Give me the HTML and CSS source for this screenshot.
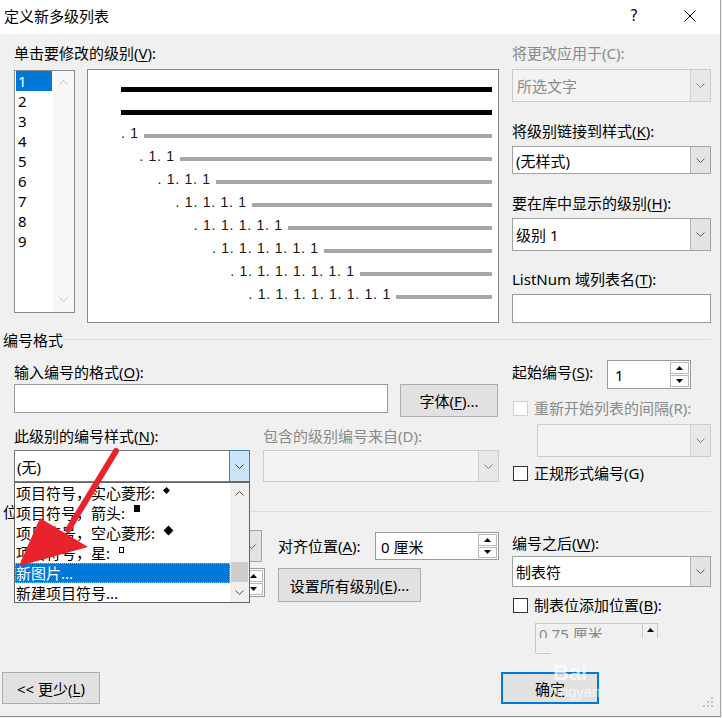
FILE: index.html
```html
<!DOCTYPE html>
<html>

	<head>

		<meta charset="UTF-8">
		<link rel="stylesheet" href="styles.css">
		<title>定义新多级列表</title>

	</head>

	<body>

		<div class="dialog">

			<div class="titlebar">
				<span class="title">定义新多级列表</span>
				<span class="help">?</span>
				<svg class="close" width="12" height="12" viewBox="0 0 12 12"><path d="M0.5 0.5 L11.5 11.5 M11.5 0.5 L0.5 11.5" stroke="#000" stroke-width="1" fill="none"/></svg>
			</div>

			<div class="content">

				<!-- levels + preview / right side -->
				<div class="cols">
					<div class="col-main">
						<div class="label">单击要修改的级别(<u>V</u>):</div>
						<div class="levels">
							<div class="listbox">
								<div class="list-items">
									<div class="list-item selected">1</div>
									<div class="list-item">2</div>
									<div class="list-item">3</div>
									<div class="list-item">4</div>
									<div class="list-item">5</div>
									<div class="list-item">6</div>
									<div class="list-item">7</div>
									<div class="list-item">8</div>
									<div class="list-item">9</div>
								</div>
								<div class="vscroll">
									<svg width="9" height="5" viewBox="0 0 9 5"><path d="M0.5 4.5 L4.5 0.5 L8.5 4.5" fill="none" stroke="#c2c2c2"/></svg>
									<svg width="9" height="5" viewBox="0 0 9 5"><path d="M0.5 0.5 L4.5 4.5 L8.5 0.5" fill="none" stroke="#c2c2c2"/></svg>
								</div>
							</div>
							<div class="preview">
								<div class="prow"><span class="pbar black"></span></div>
								<div class="prow"><span class="pbar black"></span></div>
								<div class="prow" style="--i:0"><span class="pnum">. 1</span><span class="pbar"></span></div>
								<div class="prow" style="--i:1"><span class="pnum">. 1. 1</span><span class="pbar"></span></div>
								<div class="prow" style="--i:2"><span class="pnum">. 1. 1. 1</span><span class="pbar"></span></div>
								<div class="prow" style="--i:3"><span class="pnum">. 1. 1. 1. 1</span><span class="pbar"></span></div>
								<div class="prow" style="--i:4"><span class="pnum">. 1. 1. 1. 1. 1</span><span class="pbar"></span></div>
								<div class="prow" style="--i:5"><span class="pnum">. 1. 1. 1. 1. 1. 1</span><span class="pbar"></span></div>
								<div class="prow" style="--i:6"><span class="pnum">. 1. 1. 1. 1. 1. 1. 1</span><span class="pbar"></span></div>
								<div class="prow" style="--i:7"><span class="pnum">. 1. 1. 1. 1. 1. 1. 1. 1</span><span class="pbar"></span></div>
							</div>
						</div>
					</div>

					<div class="col-side">
						<div class="label disabled">将更改应用于(C):</div>
						<div class="combo disabled apply">
							<span class="combo-text">所选文字</span>
							<span class="combo-btn"><svg width="9" height="5" viewBox="0 0 9 5"><path d="M0.5 0.5 L4.5 4.5 L8.5 0.5" fill="none" stroke="#808080"/></svg></span>
						</div>
						<div class="label side-gap">将级别链接到样式(<u>K</u>):</div>
						<div class="combo link-style">
							<span class="combo-text">(无样式)</span>
							<span class="combo-btn"><svg width="9" height="5" viewBox="0 0 9 5"><path d="M0.5 0.5 L4.5 4.5 L8.5 0.5" fill="none" stroke="#606060"/></svg></span>
						</div>
						<div class="label side-gap">要在库中显示的级别(<u>H</u>):</div>
						<div class="combo gallery-level">
							<span class="combo-text">级别 1</span>
							<span class="combo-btn"><svg width="9" height="5" viewBox="0 0 9 5"><path d="M0.5 0.5 L4.5 4.5 L8.5 0.5" fill="none" stroke="#606060"/></svg></span>
						</div>
						<div class="label side-gap-s">ListNum 域列表名(<u>T</u>):</div>
						<div class="textbox listnum"></div>
					</div>
				</div>

				<!-- 编号格式 -->
				<div class="group-head">
					<span>编号格式</span>
					<i class="group-line"></i>
				</div>

				<div class="cols">
					<div class="col-main">
						<div class="label fmt-label">输入编号的格式(<u>O</u>):</div>
						<div class="fmt-row">
							<div class="textbox fmt-input"></div>
							<button class="btn font-btn">字体(<u>F</u>)...</button>
						</div>
						<div class="style-grid">
							<div class="label">此级别的编号样式(<u>N</u>):</div>
							<div class="label disabled">包含的级别编号来自(D):</div>
							<div class="combo focused">
								<span class="combo-text">(无)</span>
								<span class="combo-btn"><svg width="9" height="5" viewBox="0 0 9 5"><path d="M0.5 0.5 L4.5 4.5 L8.5 0.5" fill="none" stroke="#404040"/></svg></span>
							</div>
							<div class="combo disabled">
								<span class="combo-text"></span>
								<span class="combo-btn"><svg width="9" height="5" viewBox="0 0 9 5"><path d="M0.5 0.5 L4.5 4.5 L8.5 0.5" fill="none" stroke="#808080"/></svg></span>
							</div>
						</div>
					</div>

					<div class="col-side">
						<div class="start-row">
							<span class="label">起始编号(<u>S</u>):</span>
							<div class="spin start-spin">
								<span class="spin-text">1</span>
								<span class="spin-btns">
									<span class="spin-btn"><svg width="7" height="4" viewBox="0 0 7 4"><path d="M0 4 L3.5 0 L7 4Z" fill="#000"/></svg></span>
									<span class="spin-btn"><svg width="7" height="4" viewBox="0 0 7 4"><path d="M0 0 L3.5 4 L7 0Z" fill="#000"/></svg></span>
								</span>
							</div>
						</div>
						<label class="check disabled restart">
							<span class="check-box"></span>
							<span>重新开始列表的间隔(R):</span>
						</label>
						<div class="combo disabled restart-combo">
							<span class="combo-text"></span>
							<span class="combo-btn"><svg width="9" height="5" viewBox="0 0 9 5"><path d="M0.5 0.5 L4.5 4.5 L8.5 0.5" fill="none" stroke="#808080"/></svg></span>
						</div>
						<label class="check legal">
							<span class="check-box"></span>
							<span>正规形式编号(G)</span>
						</label>
					</div>
				</div>

				<!-- 位置 (left part is covered by the open list) -->
				<div class="group-head pos-head">
					<span>位</span>
					<i class="group-line"></i>
				</div>

				<div class="cols">
					<div class="col-main">
						<div class="pos-row">
							<span class="pos-space"></span>
							<div class="combo align-combo">
								<span class="combo-text"></span>
								<span class="combo-btn"><svg width="9" height="5" viewBox="0 0 9 5"><path d="M0.5 0.5 L4.5 4.5 L8.5 0.5" fill="none" stroke="#606060"/></svg></span>
							</div>
							<span class="label at-label">对齐位置(<u>A</u>):</span>
							<div class="spin at-spin">
								<span class="spin-text">0 厘米</span>
								<span class="spin-btns">
									<span class="spin-btn"><svg width="7" height="4" viewBox="0 0 7 4"><path d="M0 4 L3.5 0 L7 4Z" fill="#000"/></svg></span>
									<span class="spin-btn"><svg width="7" height="4" viewBox="0 0 7 4"><path d="M0 0 L3.5 4 L7 0Z" fill="#000"/></svg></span>
								</span>
							</div>
						</div>
						<div class="pos-row second">
							<span class="pos-space"></span>
							<div class="spin indent-spin">
								<span class="spin-text"></span>
								<span class="spin-btns">
									<span class="spin-btn"><svg width="7" height="4" viewBox="0 0 7 4"><path d="M0 4 L3.5 0 L7 4Z" fill="#000"/></svg></span>
									<span class="spin-btn"><svg width="7" height="4" viewBox="0 0 7 4"><path d="M0 0 L3.5 4 L7 0Z" fill="#000"/></svg></span>
								</span>
							</div>
							<button class="btn all-btn">设置所有级别(<u>E</u>)...</button>
						</div>
					</div>

					<div class="col-side">
						<div class="label after-label">编号之后(<u>W</u>):</div>
						<div class="combo after-combo">
							<span class="combo-text">制表符</span>
							<span class="combo-btn"><svg width="9" height="5" viewBox="0 0 9 5"><path d="M0.5 0.5 L4.5 4.5 L8.5 0.5" fill="none" stroke="#606060"/></svg></span>
						</div>
						<label class="check tab-check">
							<span class="check-box"></span>
							<span>制表位添加位置(<u>B</u>):</span>
						</label>
						<div class="tabpos">
							<div class="tabpos-clip">
								<span class="tabpos-text">0.75 厘米</span>
								<span class="tabpos-btn"><svg width="7" height="4" viewBox="0 0 7 4"><path d="M0 4 L3.5 0 L7 4Z" fill="#000"/></svg></span>
							</div>
							<div class="tabpos-stub"></div>
						</div>
					</div>
				</div>

				<div class="footer">
					<button class="btn less-btn">&lt;&lt; 更少(<u>L</u>)</button>
					<button class="btn ok-btn">确定</button>
				</div>

			</div>

			<!-- open dropdown of 此级别的编号样式 -->
			<div class="dropdown">
				<div class="dd-items">
					<div class="dd-item">项目符号，实心菱形: <span class="sym diamond-s"></span></div>
					<div class="dd-item">项目符号，箭头: <span class="sym square-s"></span></div>
					<div class="dd-item">项目符号，空心菱形: <span class="sym diamond-l"></span></div>
					<div class="dd-item">项目符号，星: <span class="sym square-o"></span></div>
					<div class="dd-item selected">新图片...</div>
					<div class="dd-item">新建项目符号...</div>
				</div>
				<div class="dd-scroll">
					<span class="dd-arrow"><svg width="9" height="5" viewBox="0 0 9 5"><path d="M0.5 4.5 L4.5 0.5 L8.5 4.5" fill="none" stroke="#505050"/></svg></span>
					<span class="dd-track"><span class="dd-thumb"></span></span>
					<span class="dd-arrow"><svg width="9" height="5" viewBox="0 0 9 5"><path d="M0.5 0.5 L4.5 4.5 L8.5 0.5" fill="none" stroke="#505050"/></svg></span>
				</div>
			</div>

			<div class="watermark">
				<span class="wm-big">Bai</span>
				<span class="wm-small">jingyan</span>
			</div>

			<svg class="grip" width="10" height="10" viewBox="0 0 10 10"><rect x="8" y="0" width="2" height="2" fill="#c4c4c4"/><rect x="8" y="4" width="2" height="2" fill="#c4c4c4"/><rect x="4" y="4" width="2" height="2" fill="#c4c4c4"/><rect x="8" y="8" width="2" height="2" fill="#c4c4c4"/><rect x="4" y="8" width="2" height="2" fill="#c4c4c4"/><rect x="0" y="8" width="2" height="2" fill="#c4c4c4"/></svg>

			<svg class="red-arrow" width="722" height="718" viewBox="0 0 722 718">
				<line x1="116" y1="451" x2="68" y2="530" stroke="#e8232b" stroke-width="6" stroke-linecap="round"/>
				<polygon points="19,566 40,518 88,547" fill="#e8232b"/>
			</svg>

		</div>

	</body>
</html>
```

FILE: styles.css
```css
* {
	box-sizing: border-box;
}
body {
	margin: 0;
	background: #f0f0f0;
	font-family: "Noto Sans", "Noto Sans CJK SC", sans-serif;
	font-size: 15px;
	color: #000;
}
button {
	font: inherit;
	color: inherit;
}
u {
	text-decoration: underline;
	text-underline-offset: 2px;
	text-decoration-thickness: 1px;
}

.dialog {
	position: relative;
	width: 721px;
	height: 717px;
	background: #f0f0f0;
	border-right: 1px solid #a3a3a3;
	border-bottom: 1px solid #8c8c8c;
	overflow: hidden;
}

/* title bar */
.titlebar {
	display: flex;
	align-items: center;
	height: 34px;
	padding: 0 24px 2px 4px;
	background: #fff;
}
.title {
	flex: 1;
	line-height: 20px;
}
.help {
	width: 10px;
	font-family: "DejaVu Sans", sans-serif;
	font-size: 15px;
	line-height: 20px;
	color: #111;
}
.close {
	margin-left: 44px;
}

.content {
	padding: 9px 9px 0 14px;
}
.cols {
	display: flex;
	gap: 13px;
}
.col-main {
	width: 485px;
}
.col-side {
	width: 200px;
}
.label {
	height: 20px;
	line-height: 20px;
	white-space: nowrap;
}
.disabled,
.label.disabled {
	color: #8a8a8a;
}

/* level list */
.levels {
	display: flex;
	gap: 12px;
	margin-top: 6px;
}
.listbox {
	display: flex;
	width: 61px;
	height: 243px;
	margin-top: 1px;
	background: #fff;
	border: 1px solid #8a8a8a;
}
.list-items {
	width: 38px;
	padding: 0 1px;
}
.list-item {
	height: 20px;
	line-height: 20px;
	padding-left: 2px;
}
.list-item.selected {
	background: #0078d7;
	color: #fff;
}
.vscroll {
	flex: 1;
	display: flex;
	flex-direction: column;
	justify-content: space-between;
	align-items: center;
	padding: 9px 0 10px;
	background: #f7f7f7;
}

/* preview */
.preview {
	width: 412px;
	height: 254px;
	padding: 8px 6px 0 33px;
	background: #fff;
	border: 1px solid #8a8a8a;
}
.prow {
	display: flex;
	align-items: center;
	height: 23px;
}
.pnum {
	margin: 0 5px 6px calc(var(--i) * 18.2px);
	font-family: "Liberation Sans", Arial, sans-serif;
	font-size: 14px;
	line-height: 14px;
	letter-spacing: 0.75px;
	white-space: pre;
	color: #141414;
}
.pbar {
	flex: 1;
	height: 4px;
	background: #a6a6a6;
}
.pbar.black {
	height: 5px;
	background: #000;
}

/* combos, text boxes, spins */
.combo {
	display: flex;
	background: #fff;
	border: 1px solid #a2a2a2;
}
.combo-text {
	flex: 1;
	display: flex;
	align-items: center;
	padding-left: 3px;
	white-space: nowrap;
	overflow: hidden;
}
.combo-btn {
	width: 20px;
	display: flex;
	align-items: center;
	justify-content: center;
	background: #e3e3e3;
	border-left: 1px solid #b4b4b4;
}
.combo.disabled {
	background: #f3f3f3;
	border-color: #cccccc;
}
.combo.disabled .combo-btn {
	background: #e8e8e8;
	border-left-color: #d0d0d0;
}
.combo.focused {
	border-color: #7a7a7a;
}
.combo.focused .combo-btn {
	background: #cce4f7;
	border: 1px solid #3c7fb1;
	margin: -1px -1px -1px 0;
	width: 21px;
}
.textbox {
	background: #fff;
	border: 1px solid #9a9a9a;
}
.spin {
	display: flex;
	background: #fff;
	border: 1px solid #9a9a9a;
}
.spin-text {
	flex: 1;
	display: flex;
	align-items: center;
	padding-left: 6px;
	white-space: nowrap;
	overflow: hidden;
}
.spin-btns {
	width: 20px;
	display: flex;
	flex-direction: column;
	gap: 1px;
	padding: 1px 1px 1px 0;
}
.spin-btn {
	flex: 1;
	display: flex;
	align-items: center;
	justify-content: center;
	background: #fdfdfd;
	border: 1px solid #b9b9b9;
}
.btn {
	display: flex;
	align-items: center;
	justify-content: center;
	padding: 0;
	background: #e1e1e1;
	border: 1px solid #adadad;
	white-space: nowrap;
}

/* checkboxes */
.check {
	display: flex;
	align-items: center;
	gap: 6px;
	height: 20px;
	line-height: 20px;
	white-space: nowrap;
}
.check-box {
	width: 15px;
	height: 15px;
	margin-left: 1px;
	background: #fff;
	border: 1px solid #333;
}
.check.disabled .check-box {
	border-color: #cfcfcf;
}

/* right column, top */
.apply {
	height: 33px;
	margin-top: 6px;
}
.apply .combo-text {
	padding-left: 4px;
}
.side-gap {
	margin-top: 19px;
}
.side-gap-s {
	margin-top: 18px;
}
.link-style {
	height: 28px;
	margin-top: 5px;
}
.gallery-level {
	height: 33px;
	margin-top: 5px;
}
.listnum {
	height: 29px;
	margin-top: 5px;
}

/* group headings */
.group-head {
	display: flex;
	align-items: center;
	height: 20px;
	margin: 7px 0 0 -11px;
	line-height: 20px;
}
.group-line {
	flex: 1;
	height: 1px;
	margin-top: -1px;
	background: #dcdcdc;
}
.pos-head {
	margin-top: 19px;
}
.pos-head .group-line {
	margin-left: 18px;
}

/* numbering format */
.fmt-label {
	margin-top: 12px;
}
.fmt-row {
	display: flex;
	align-items: flex-start;
	gap: 12px;
	margin-top: 2px;
}
.fmt-input {
	width: 374px;
	height: 29px;
}
.font-btn {
	width: 98px;
	height: 33px;
}
.style-grid {
	display: grid;
	grid-template-columns: 236px 236px;
	column-gap: 13px;
	row-gap: 4px;
	margin-top: 9px;
}
.style-grid .combo {
	height: 32px;
}
.style-grid .combo-text {
	padding-left: 2px;
}
.start-row {
	display: flex;
	align-items: flex-start;
	margin-top: 10px;
}
.start-row .label {
	width: 95px;
	margin-top: 2px;
}
.start-spin {
	width: 84px;
	height: 29px;
}
.start-spin .spin-text {
	padding-left: 7px;
}
.restart {
	margin-top: 9px;
}
.restart-combo {
	height: 33px;
	margin: 6px 0 0 25px;
}
.legal {
	margin-top: 6px;
}

/* position */
.pos-row {
	display: flex;
	align-items: center;
	height: 32px;
	margin-top: 8px;
}
.pos-row.second {
	align-items: flex-start;
	height: 34px;
	margin-top: 6px;
}
.pos-space {
	width: 126px;
}
.align-combo {
	width: 122px;
	height: 32px;
}
.at-label {
	width: 97px;
	margin-left: 16px;
}
.at-spin {
	width: 124px;
	height: 28px;
}
.at-spin .spin-text {
	padding-left: 5px;
}
.indent-spin {
	width: 125px;
	height: 29px;
}
.all-btn {
	width: 143px;
	height: 34px;
	margin-left: 13px;
}
.after-label {
	margin-top: 11px;
}
.after-combo {
	height: 31px;
	margin-top: 3px;
}
.tab-check {
	margin-top: 8px;
}
.tabpos {
	width: 123px;
	height: 30px;
	margin: 8px 0 0 23px;
	border-left: 1px solid #c8c8c8;
	border-top: 1px solid #c8c8c8;
}
.tabpos-clip {
	display: flex;
	height: 14px;
	overflow: hidden;
	border-right: 1px solid #c8c8c8;
}
.tabpos-text {
	flex: 1;
	padding: 0 0 0 3px;
	line-height: 20px;
	color: #8a8a8a;
	white-space: nowrap;
}
.tabpos-btn {
	width: 15px;
	display: flex;
	justify-content: center;
	padding-top: 4px;
	border-left: 1px solid #c8c8c8;
}
.tabpos-stub {
	width: 15px;
	height: 16px;
	border-bottom: 1px solid #c8c8c8;
}

/* footer */
.footer {
	display: flex;
	margin-top: 19px;
}
.less-btn {
	width: 98px;
	height: 32px;
	margin-left: -12px;
}
.ok-btn {
	width: 98px;
	height: 32px;
	margin-left: 401px;
	border: 2px solid #0078d7;
}

/* open dropdown list */
.dropdown {
	position: absolute;
	left: 14px;
	top: 482px;
	display: flex;
	width: 236px;
	height: 121px;
	background: #fff;
	border: 1px solid #646464;
}
.dd-items {
	width: 215px;
	overflow: hidden;
}
.dd-item {
	height: 20px;
	line-height: 20px;
	padding-left: 1px;
	white-space: nowrap;
}
.dd-item.selected {
	background: #0078d7;
	color: #fff;
	outline: 1px dotted rgba(255, 255, 255, 0.55);
	outline-offset: -1px;
}
.dd-scroll {
	flex: 1;
	display: flex;
	flex-direction: column;
	background: #f0f0f0;
}
.dd-arrow {
	height: 20px;
	display: flex;
	align-items: center;
	justify-content: center;
}
.dd-track {
	flex: 1;
	display: flex;
	justify-content: center;
}
.dd-thumb {
	width: 17px;
	height: 20px;
	margin-top: 59px;
	background: #cdcdcd;
}
.sym {
	display: inline-block;
	vertical-align: top;
	background: #000;
}
.diamond-s {
	width: 5px;
	height: 5px;
	margin: 5px 0 0 5px;
	transform: rotate(45deg);
}
.square-s {
	width: 6px;
	height: 7px;
	margin: 2px 0 0 5px;
}
.diamond-l {
	width: 7px;
	height: 7px;
	margin: 4px 0 0 6px;
	transform: rotate(45deg);
}
.square-o {
	width: 5px;
	height: 6px;
	margin: 4px 0 0 5px;
	background: #fff;
	border: 1px solid #000;
}

/* overlays */
.watermark {
	position: absolute;
	left: 553px;
	top: 662px;
	width: 48px;
	height: 40px;
	overflow: hidden;
	color: rgba(255, 255, 255, 0.7);
	font-family: "Liberation Sans", Arial, sans-serif;
	pointer-events: none;
}
.wm-big {
	display: block;
	font-size: 22px;
	font-weight: bold;
	line-height: 22px;
}
.wm-small {
	display: block;
	font-size: 15px;
	line-height: 16px;
}
.grip {
	position: absolute;
	left: 703px;
	top: 697px;
}
.red-arrow {
	position: absolute;
	left: 0;
	top: 0;
	pointer-events: none;
}
```
